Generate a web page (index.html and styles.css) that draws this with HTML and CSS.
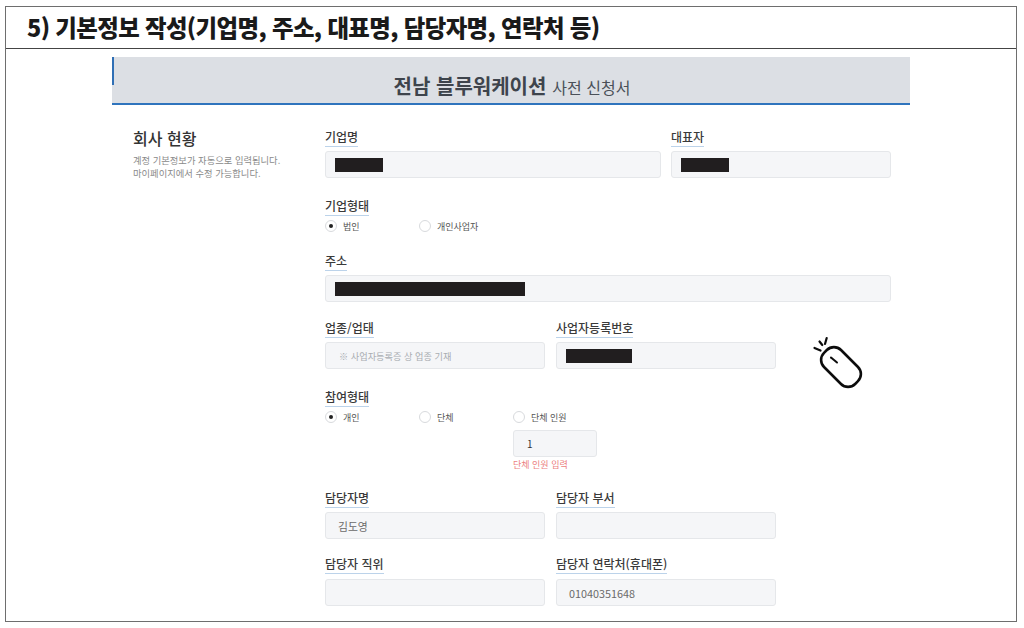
FILE: index.html
```html
<!DOCTYPE html>
<html lang="ko">
<head>
<meta charset="utf-8">
<title>기본정보 작성</title>
<link rel="stylesheet" href="styles.css">
</head>
<body>
<div class="frame">
  <h1 class="title">5) 기본정보 작성(기업명, 주소, 대표명, 담당자명, 연락처 등)</h1>
  <div class="page">
    <div class="band">
      <span class="band-mark"></span>
      <h2 class="band-title"><strong>전남 블루워케이션</strong> <span>사전 신청서</span></h2>
    </div>
    <div class="section">
      <aside class="side">
        <h3 class="side-title">회사 현황</h3>
        <p class="side-text">계정 기본정보가 자동으로 입력됩니다.<br>마이페이지에서 수정 가능합니다.</p>
      </aside>
      <div class="form">
        <div class="row row-top">
          <div class="field f-wide"><label class="lab">기업명</label><div class="input"><i class="redact r48"></i></div></div>
          <div class="field f-half"><label class="lab">대표자</label><div class="input"><i class="redact r48"></i></div></div>
        </div>
        <div class="row row-type">
          <div class="field f-full">
            <label class="lab">기업형태</label>
            <div class="radios">
              <div class="radio-item"><span class="radio on"></span>법인</div>
              <div class="radio-item"><span class="radio"></span>개인사업자</div>
            </div>
          </div>
        </div>
        <div class="row row-addr">
          <div class="field f-full"><label class="lab">주소</label><div class="input"><i class="redact r190"></i></div></div>
        </div>
        <div class="row row-biz">
          <div class="field f-half"><label class="lab">업종/업태</label><div class="input placeholder">※ 사업자등록증 상 업종 기재</div></div>
          <div class="field f-half"><label class="lab">사업자등록번호</label><div class="input"><i class="redact r66"></i></div></div>
        </div>
        <div class="row row-join">
          <div class="field f-full">
            <label class="lab">참여형태</label>
            <div class="radios">
              <div class="radio-item"><span class="radio on"></span>개인</div>
              <div class="radio-item"><span class="radio"></span>단체</div>
              <div class="radio-col">
                <div class="radio-item"><span class="radio"></span>단체 인원</div>
                <div class="input count">1</div>
                <p class="err">단체 인원 입력</p>
              </div>
            </div>
          </div>
        </div>
        <div class="row row-person">
          <div class="field f-half"><label class="lab">담당자명</label><div class="input value">김도영</div></div>
          <div class="field f-half"><label class="lab">담당자 부서</label><div class="input"></div></div>
        </div>
        <div class="row row-last">
          <div class="field f-half"><label class="lab">담당자 직위</label><div class="input"></div></div>
          <div class="field f-half"><label class="lab">담당자 연락처(휴대폰)</label><div class="input value">01040351648</div></div>
        </div>
      </div>
    </div>
    <svg class="mouse" width="54" height="58" viewBox="0 0 54 58" fill="none" stroke="#0c0c0c" stroke-linecap="round">
      <rect x="-12" y="-22" width="24" height="44" rx="10" transform="translate(28 31) rotate(-45)" stroke-width="2.6"/>
      <path d="M18 21.5 L24 26.5" stroke-width="2"/>
      <path d="M1.5 12 L7.5 14.5 M6.5 5.5 L9.3 9 M13.7 2 L12 8" stroke-width="2.2"/>
    </svg>
  </div>
</div>
</body>
</html>
```

FILE: styles.css
```css
* { box-sizing: border-box; }
html, body { margin: 0; padding: 0; background: #fff; }
body { font-family: "Noto Sans CJK KR", "Noto Sans", sans-serif; color: #333; height: 628px; overflow: hidden; }

.frame { margin: 6px 0 0 5px; width: 1012px; height: 616px; border: 1px solid #6e6e6e; overflow: hidden; }
.title { margin: 0; height: 42px; padding-left: 21px; border-bottom: 1px solid #444; font-size: 23.4px; line-height: 41px; font-weight: 900; color: #1a1a1a; letter-spacing: -0.6px; white-space: nowrap; }

.page { position: relative; padding: 8px 0 0 106px; }
.band { position: relative; width: 798px; height: 48px; padding-left: 2px; background: #dcdfe4; border-bottom: 2px solid #2f74bd; text-align: center; }
.band-mark { position: absolute; left: 0; top: 0; width: 2px; height: 28px; background: #2f6fb5; }
.band-title { margin: 0; padding-top: 14px; font-size: 14px; line-height: 29px; font-weight: 400; color: #4a5058; }
.band-title strong { font-size: 20px; font-weight: 700; color: #3e444c; }
.band-title span { margin-left: 2px; font-size: 16px; }

.section { display: flex; }
.side { width: 213px; padding: 22px 0 0 21px; }
.side-title { margin: 0; font-size: 16px; line-height: 22px; font-weight: 500; color: #333; }
.side-text { margin: 5px 0 0; font-size: 9.3px; line-height: 13px; color: #8a8a8a; }

.form { width: 566px; padding-top: 24px; }
.row { display: flex; gap: 11px; }
.row-top { gap: 10px; }
.row-type { margin-top: 20px; }
.row-addr { margin-top: 17px; }
.row-biz { margin-top: 18px; }
.row-join { margin-top: 20px; }
.row-person { margin-top: 18px; }
.row-last { margin-top: 17px; }
.row-last .input { margin-top: 5px; }

.field { display: flex; flex-direction: column; align-items: flex-start; }
.f-wide { width: 336px; }
.f-half { width: 220px; }
.f-full { width: 566px; }

.lab { display: block; height: 18px; font-size: 12px; line-height: 15px; font-weight: 500; color: #3a3a3a; border-bottom: 1.5px solid #bcd3ea; white-space: nowrap; }

.input { width: 100%; height: 27px; margin-top: 4px; padding-left: 9px; display: flex; align-items: center; background: #f5f6f8; border: 1px solid #e5e7ea; border-radius: 3px; font-size: 10px; color: #666; }
.placeholder { padding-left: 13px; font-size: 9.2px; color: #a9adb2; }
.value { padding-left: 12px; font-size: 10.8px; color: #6a6a6a; }
.redact { display: block; height: 14px; background: #211e1f; }
.r48 { width: 48px; }
.r66 { width: 66px; }
.r190 { width: 190px; }

.radios { display: flex; align-items: flex-start; }
.radio-item { width: 94px; height: 20px; display: flex; align-items: center; gap: 6px; font-size: 9px; color: #555; white-space: nowrap; }
.radio { flex: none; width: 12px; height: 12px; border-radius: 50%; border: 1px solid #d8dadd; background: #fff; display: flex; align-items: center; justify-content: center; }
.radio.on::after { content: ""; width: 4px; height: 4px; border-radius: 50%; background: #222; }

.radio-col { display: flex; flex-direction: column; }
.count { width: 84px; margin-top: 3px; padding-left: 13px; color: #333; }
.err { margin: 1px 0 0; font-size: 9px; line-height: 14px; color: #ec7f80; white-space: nowrap; }

.mouse { position: absolute; left: 807px; top: 287px; }
```
